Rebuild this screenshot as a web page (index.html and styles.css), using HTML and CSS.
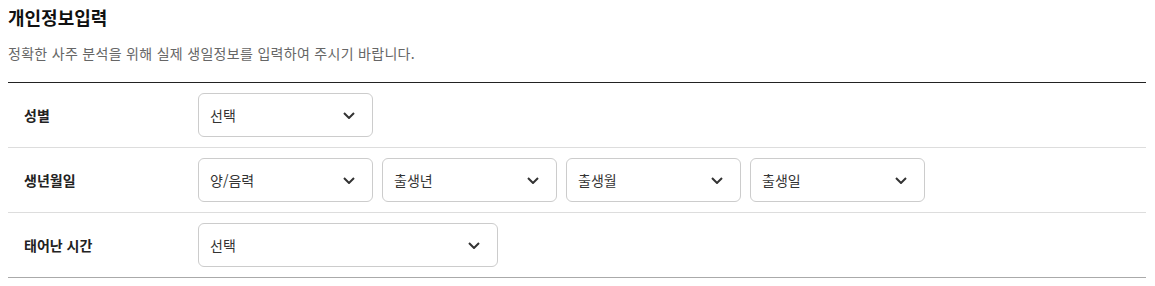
FILE: index.html
```html
<!DOCTYPE html>
<html lang="ko">
<head>
    <meta charset="UTF-8">
    <meta name="viewport" content="width=device-width, initial-scale=1.0">
    <title>개인정보입력</title>
    <link rel="stylesheet" href="styles.css">
</head>
<body>
    <div class="container">
        <h2 class="title">개인정보입력</h2>
        <p class="desc">정확한 사주 분석을 위해 실제 생일정보를 입력하여 주시기 바랍니다.</p>

        <div class="form-table">
            <div class="form-row">
                <div class="label">성별</div>
                <div class="fields">
                    <div class="select">
                        <span>선택</span>
                        <svg class="chevron" viewBox="0 0 12 7"><path d="M1 1l5 5 5-5"/></svg>
                    </div>
                </div>
            </div>
            <div class="form-row">
                <div class="label">생년월일</div>
                <div class="fields">
                    <div class="select">
                        <span>양/음력</span>
                        <svg class="chevron" viewBox="0 0 12 7"><path d="M1 1l5 5 5-5"/></svg>
                    </div>
                    <div class="select">
                        <span>출생년</span>
                        <svg class="chevron" viewBox="0 0 12 7"><path d="M1 1l5 5 5-5"/></svg>
                    </div>
                    <div class="select">
                        <span>출생월</span>
                        <svg class="chevron" viewBox="0 0 12 7"><path d="M1 1l5 5 5-5"/></svg>
                    </div>
                    <div class="select">
                        <span>출생일</span>
                        <svg class="chevron" viewBox="0 0 12 7"><path d="M1 1l5 5 5-5"/></svg>
                    </div>
                </div>
            </div>
            <div class="form-row">
                <div class="label">태어난 시간</div>
                <div class="fields">
                    <div class="select wide">
                        <span>선택</span>
                        <svg class="chevron" viewBox="0 0 12 7"><path d="M1 1l5 5 5-5"/></svg>
                    </div>
                </div>
            </div>
        </div>
    </div>
</body>
</html>
```

FILE: styles.css
```css
body {
    margin: 0;
    font-family: "Noto Sans CJK KR", "Noto Sans", sans-serif;
    color: #222;
    background: #fff;
}
.container {
    padding: 0 8px 0 8px;
    width: 1138px;
}
.title {
    margin: 0;
    padding-top: 5px;
    font-size: 18px;
    line-height: 24px;
    font-weight: bold;
    color: #111;
}
.desc {
    margin: 14px 0 19px 0;
    font-size: 14px;
    letter-spacing: 0.3px;
    line-height: 20px;
    color: #666;
}
.form-table {
    border-top: 1px solid #222;
    border-bottom: 1px solid #aaa;
}
.form-row {
    display: flex;
    align-items: center;
    height: 64px;
    border-bottom: 1px solid #ddd;
}
.form-row:last-child {
    border-bottom: none;
}
.label {
    width: 190px;
    padding-left: 16px;
    box-sizing: border-box;
    font-size: 14px;
    font-weight: bold;
    color: #222;
}
.fields {
    display: flex;
    gap: 9px;
}
.select {
    width: 175px;
    height: 44px;
    box-sizing: border-box;
    border: 1px solid #ccc;
    border-radius: 6px;
    display: flex;
    align-items: center;
    justify-content: space-between;
    padding: 0 17px 0 11px;
    font-size: 14px;
    color: #333;
}
.select.wide {
    width: 300px;
}
.chevron {
    width: 12px;
    height: 7px;
    fill: none;
    stroke: #333;
    stroke-width: 2;
}
```
